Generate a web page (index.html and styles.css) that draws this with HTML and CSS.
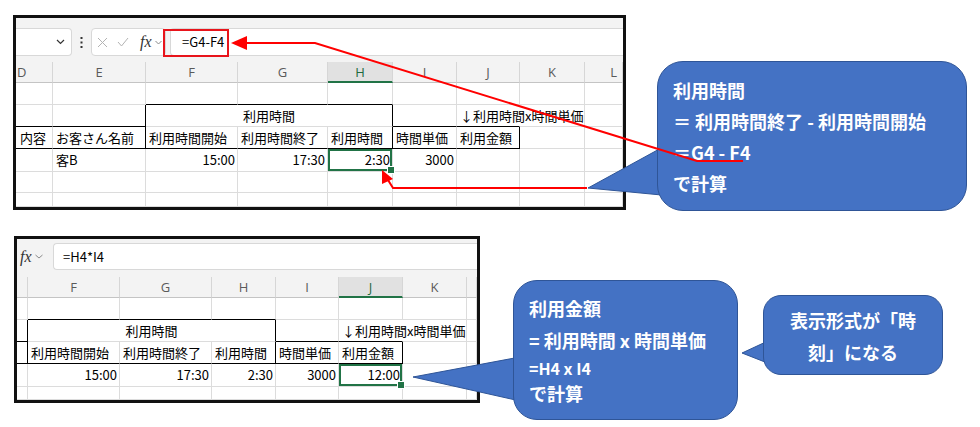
FILE: index.html
```html
<!DOCTYPE html>
<html lang="ja">
<head>
<meta charset="utf-8">
<title>利用時間の計算</title>
<link rel="stylesheet" href="styles.css">
</head>
<body>
<div class="canvas">

  <section class="sheet sheet-top">
    <div class="strip strip-top"></div>
    <div class="fbar">
      <div class="namebox"><svg width="9" height="6" viewBox="0 0 9 6"><path d="M1 1l3.5 3.5L8 1" stroke="#333" stroke-width="1.2" fill="none"/></svg></div>
      <div class="dots"><svg width="3" height="11" viewBox="0 0 3 11"><rect x="0.5" y="0" width="2" height="2" fill="#333"/><rect x="0.5" y="4.5" width="2" height="2" fill="#333"/><rect x="0.5" y="9" width="2" height="2" fill="#333"/></svg></div>
      <div class="fxbox">
        <svg class="ico-x" width="11" height="11" viewBox="0 0 11 11"><path d="M1 1L10 10M10 1L1 10" stroke="#b3b3b3" stroke-width="1" fill="none"/></svg>
        <svg class="ico-ok" width="12" height="10" viewBox="0 0 12 10"><path d="M1 5l3.5 4L11 1" stroke="#b3b3b3" stroke-width="1" fill="none"/></svg>
        <span class="fx">fx</span>
        <svg class="ico-chev" width="7" height="5" viewBox="0 0 7 5"><path d="M0.5 1l3 3 3-3" stroke="#8a8a8a" stroke-width="1" fill="none"/></svg>
      </div>
      <div class="formula formula-top">=G4-F4</div>
    </div>
    <div class="gap"></div>
    <div class="grid grid-top">
      <div class="h left">D</div><div class="h">E</div><div class="h">F</div><div class="h">G</div><div class="h on">H</div><div class="h">I</div><div class="h">J</div><div class="h">K</div><div class="h right">L</div>

      <div class="c"></div><div class="c"></div><div class="c bb"></div><div class="c bb"></div><div class="c bb"></div><div class="c"></div><div class="c"></div><div class="c"></div><div class="c"></div>

      <div class="c bb"></div><div class="c bb br"></div><div class="c span3 ctr br">利用時間</div><div class="c bb"></div><div class="c bb nr ov">↓利用時間x時間単価</div><div class="c"></div><div class="c"></div>

      <div class="c bb dcell">内容</div><div class="c bb br">お客さん名前</div><div class="c bb">利用時間開始</div><div class="c bb">利用時間終了</div><div class="c bb br">利用時間</div><div class="c bb">時間単価</div><div class="c bb br">利用金額</div><div class="c"></div><div class="c"></div>

      <div class="c"></div><div class="c">客B</div><div class="c num">15:00</div><div class="c num">17:30</div><div class="c num sel">2:30</div><div class="c num">3000</div><div class="c"></div><div class="c"></div><div class="c"></div>

      <div class="c"></div><div class="c"></div><div class="c"></div><div class="c"></div><div class="c"></div><div class="c"></div><div class="c"></div><div class="c"></div><div class="c"></div>

      <div class="c"></div><div class="c"></div><div class="c"></div><div class="c"></div><div class="c"></div><div class="c"></div><div class="c"></div><div class="c"></div><div class="c"></div>
    </div>
    <div class="redbox"></div>
  </section>

  <section class="sheet sheet-bottom">
    <div class="strip strip-bottom"></div>
    <div class="fbar">
      <div class="fxlabel">
        <span class="fx">fx</span>
        <svg class="ico-chev" width="8" height="5" viewBox="0 0 8 5"><path d="M0.5 1l3.5 3 3.5-3" stroke="#8a8a8a" stroke-width="1" fill="none"/></svg>
      </div>
      <div class="formula formula-bottom">=H4*I4</div>
    </div>
    <div class="gap"></div>
    <div class="grid grid-bottom">
      <div class="h"></div><div class="h">F</div><div class="h">G</div><div class="h">H</div><div class="h">I</div><div class="h on">J</div><div class="h">K</div><div class="h"></div>

      <div class="c"></div><div class="c bb"></div><div class="c bb"></div><div class="c bb"></div><div class="c"></div><div class="c"></div><div class="c"></div><div class="c"></div>

      <div class="c bb br"></div><div class="c span3 ctr br">利用時間</div><div class="c bb"></div><div class="c bb nr ov">↓利用時間x時間単価</div><div class="c"></div><div class="c"></div>

      <div class="c bb br"></div><div class="c bb">利用時間開始</div><div class="c bb">利用時間終了</div><div class="c bb br">利用時間</div><div class="c bb">時間単価</div><div class="c bb br">利用金額</div><div class="c"></div><div class="c"></div>

      <div class="c"></div><div class="c num">15:00</div><div class="c num">17:30</div><div class="c num">2:30</div><div class="c num">3000</div><div class="c num sel">12:00</div><div class="c"></div><div class="c"></div>

      <div class="c"></div><div class="c"></div><div class="c"></div><div class="c"></div><div class="c"></div><div class="c"></div><div class="c"></div><div class="c"></div>
    </div>
  </section>

  <svg class="tails" width="980" height="427" viewBox="0 0 980 427">
    <polygon points="588,188 663,147 672,196" fill="#4472c4" stroke="#2f5597" stroke-width="1"/>
    <polygon points="413,377 520,357 520,401" fill="#4472c4" stroke="#2f5597" stroke-width="1"/>
    <polygon points="742,353 770,340 770,364" fill="#4472c4" stroke="#2f5597" stroke-width="1"/>
  </svg>

  <div class="callout callout-a">
    <p>利用時間</p>
    <p>＝ 利用時間終了 - 利用時間開始</p>
    <p>＝G4 - F4</p>
    <p>で計算</p>
  </div>

  <div class="callout callout-b">
    <p class="l1">利用金額</p>
    <p class="l2">= 利用時間 x 時間単価</p>
    <p class="l3">=H4 x I4</p>
    <p class="l4">で計算</p>
  </div>

  <div class="callout callout-c">
    <p>表示形式が「時</p>
    <p>刻」になる</p>
  </div>

  <svg class="arrows" width="980" height="427" viewBox="0 0 980 427">
    <polyline points="245,43 315,43 697,161 743,161" stroke="#ff0000" stroke-width="2" fill="none"/>
    <polygon points="231,43 247,36 247,50" fill="#ff0000"/>
    <polyline points="587,188 393,188 388,180" stroke="#ff0000" stroke-width="2" fill="none"/>
    <polygon points="382,170 393,179 382,184" fill="#ff0000"/>
  </svg>
</div>
</body>
</html>
```

FILE: styles.css
```css
* {
  box-sizing: border-box;
  margin: 0;
  padding: 0;
}

body {
  margin: 0;
  background: #ffffff;
  font-family: "Noto Sans CJK JP", "Noto Sans", sans-serif;
}

.canvas {
  position: relative;
  width: 980px;
  height: 427px;
  overflow: hidden;
  background: #ffffff;
}

/* ---------- spreadsheet panels ---------- */
.sheet {
  position: relative;
  display: flex;
  flex-direction: column;
  border: 3px solid #111111;
  background: #f3f3f3;
  overflow: hidden;
}

.sheet-top {
  margin: 15px 0 0 13px;
  width: 613px;
  height: 195px;
}

.sheet-bottom {
  margin: 26px 0 0 14px;
  width: 466px;
  height: 167px;
}

.strip-top { height: 10px; }
.strip-bottom { height: 4px; }
.gap { height: 5px; }

.fbar {
  height: 29px;
  display: flex;
  align-items: flex-start;
}

.namebox {
  width: 56px;
  height: 28px;
  background: #ffffff;
  border: 1px solid #d8d8d8;
  border-left: none;
  border-radius: 0 4px 4px 0;
  display: flex;
  align-items: center;
  justify-content: flex-end;
  padding-right: 6px;
}

.dots {
  width: 19px;
  height: 28px;
  display: flex;
  align-items: center;
  justify-content: center;
}

.fxbox {
  width: 75px;
  height: 28px;
  background: #ffffff;
  border: 1px solid #d8d8d8;
  border-radius: 4px;
  display: flex;
  align-items: center;
  padding-left: 5px;
}

.ico-ok { margin-left: 9px; }

.fx {
  font-family: "Liberation Serif", "DejaVu Serif", serif;
  font-style: italic;
  font-size: 16px;
  color: #333333;
  line-height: 20px;
}

.fxbox .fx { margin-left: 11px; }
.fxbox .ico-chev { margin-left: 3px; }

.formula {
  flex: 1;
  height: 28px;
  background: #ffffff;
  border: 1px solid #d8d8d8;
  border-right: none;
  border-radius: 4px 0 0 4px;
  font-size: 13px;
  line-height: 26px;
  color: #000000;
}

.formula-top {
  margin-left: 4px;
  padding-left: 11px;
}

.formula-bottom {
  height: 27px;
  padding-left: 9px;
  line-height: 25px;
}

.fxlabel {
  width: 36px;
  height: 27px;
  display: flex;
  align-items: center;
  padding-left: 3px;
}

.fxlabel .ico-chev { margin-left: 3px; }

.redbox {
  position: absolute;
  left: 147px;
  top: 11px;
  width: 66px;
  height: 28px;
  border: 2px solid #e8141b;
}

/* ---------- grid ---------- */
.grid {
  display: grid;
  background: #ffffff;
}

.grid-top {
  grid-template-columns: 37px 93px 92px 90px 65px 64px 63px 65px 38px;
  grid-template-rows: 21px 22px 22px 22px 23px 21px 14px;
}

.grid-bottom {
  grid-template-columns: 11px 92px 92px 64px 63px 64px 64px 10px;
  grid-template-rows: 21px 22px 22px 22px 23px 13px;
}

.h {
  background: #f3f3f3;
  border-right: 1px solid #d6d6d6;
  border-bottom: 1px solid #c4c4c4;
  font-family: "Open Sans", "Noto Sans", sans-serif;
  font-size: 13px;
  line-height: 20px;
  color: #5a5a5a;
  text-align: center;
}

.h.on {
  background: #e1e1e1;
  border-bottom: 2px solid #217346;
  color: #1e6b3f;
}

.h.left {
  text-align: left;
  padding-left: 1px;
}

.h.right {
  text-align: right;
  padding-right: 5px;
}

.c {
  border-right: 1px solid #dcdcdc;
  border-bottom: 1px solid #dcdcdc;
  font-size: 13px;
  line-height: 21px;
  padding: 0 3px;
  white-space: nowrap;
  color: #000000;
}

.bb { border-bottom-color: #000000; }
.br { border-right-color: #000000; }
.nr { border-right-color: transparent; }

.span3 { grid-column: span 3; }
.ctr { text-align: center; }

.num {
  text-align: right;
  padding-right: 2px;
}

.ov {
  overflow: visible;
  position: relative;
  z-index: 1;
}

.dcell {
  padding-left: 4px;
}

.sel {
  position: relative;
  box-shadow: inset 0 0 0 2px #217346;
}

.sel::after {
  content: "";
  position: absolute;
  right: -3px;
  bottom: -3px;
  width: 6px;
  height: 6px;
  background: #217346;
  border: 1px solid #ffffff;
}

/* ---------- annotations ---------- */
.tails {
  position: absolute;
  left: 0;
  top: 0;
  z-index: 1;
}

.arrows {
  position: absolute;
  left: 0;
  top: 0;
  z-index: 3;
}

.callout {
  position: absolute;
  z-index: 2;
  background: #4472c4;
  border: 1px solid #2f5597;
  color: #ffffff;
  font-weight: 700;
  font-size: 18px;
  white-space: nowrap;
}

.callout-a {
  left: 657px;
  top: 61px;
  width: 310px;
  height: 150px;
  border-radius: 26px;
  padding: 13px 0 0 15px;
  line-height: 31px;
}

.callout-b {
  left: 513px;
  top: 280px;
  width: 225px;
  height: 140px;
  border-radius: 24px;
  padding: 11px 0 0 15px;
}

.callout-b .l1 { line-height: 32px; }
.callout-b .l2 { line-height: 32px; }
.callout-b .l3 { line-height: 24px; font-size: 16px; }
.callout-b .l4 { line-height: 26px; }

.callout-c {
  left: 763px;
  top: 295px;
  width: 180px;
  height: 80px;
  border-radius: 18px;
  padding-top: 8px;
  text-align: center;
  line-height: 32px;
}
```
